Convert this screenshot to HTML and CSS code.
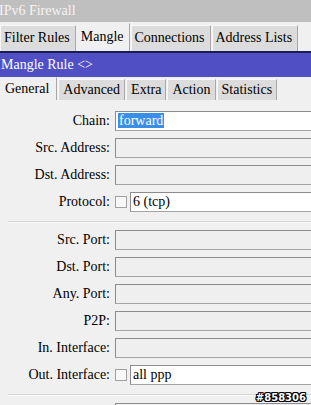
FILE: index.html
```html
<!DOCTYPE html>
<html>
<head>
<meta charset="utf-8">
<link rel="stylesheet" href="styles.css">
</head>
<body>
<div class="win">
  <div class="titlebar">IPv6 Firewall</div>
  <div class="tabs top-tabs">
    <div class="tab">Filter Rules</div>
    <div class="tab active">Mangle</div>
    <div class="tab">Connections</div>
    <div class="tab">Address Lists</div>
  </div>
  <div class="rulebar">Mangle Rule &lt;&gt;</div>
  <div class="tabs sub-tabs">
    <div class="tab active">General</div>
    <div class="tab">Advanced</div>
    <div class="tab">Extra</div>
    <div class="tab">Action</div>
    <div class="tab">Statistics</div>
  </div>
  <div class="form">
    <div class="group">
      <div class="row"><span class="lbl">Chain:</span><div class="field white"><span class="sel">forward</span></div></div>
      <div class="row"><span class="lbl">Src. Address:</span><div class="field"></div></div>
      <div class="row"><span class="lbl">Dst. Address:</span><div class="field"></div></div>
      <div class="row"><span class="lbl">Protocol:</span><span class="chk"></span><div class="field white">6 (tcp)</div></div>
    </div>
    <div class="sep"></div>
    <div class="group">
      <div class="row"><span class="lbl">Src. Port:</span><div class="field"></div></div>
      <div class="row"><span class="lbl">Dst. Port:</span><div class="field"></div></div>
      <div class="row"><span class="lbl">Any. Port:</span><div class="field"></div></div>
      <div class="row"><span class="lbl">P2P:</span><div class="field"></div></div>
      <div class="row"><span class="lbl">In. Interface:</span><div class="field"></div></div>
      <div class="row"><span class="lbl">Out. Interface:</span><span class="chk"></span><div class="field white">all ppp</div></div>
    </div>
    <div class="sep"></div>
    <div class="group">
      <div class="row"><span class="lbl"></span><div class="field"></div></div>
    </div>
  </div>
  <div class="mark">#858306</div>
</div>
</body>
</html>
```
FILE: styles.css
```css
* { box-sizing: border-box; }
html, body { margin: 0; padding: 0; }
body {
  width: 311px;
  height: 405px;
  overflow: hidden;
  background: #f0f0f0;
  font-family: "Liberation Serif", "Tinos", "DejaVu Serif", "Noto Serif", "Times New Roman", serif;
  font-size: 14px;
  color: #000;
}
.win { position: relative; width: 311px; height: 405px; overflow: hidden; }
.titlebar {
  height: 22px;
  background: #bfbfbf;
  color: #f4f4f4;
  line-height: 21px;
  text-indent: -1px;
  white-space: nowrap;
}
.tabs {
  display: flex;
  background: #f0f0f0;
  white-space: nowrap;
}
.top-tabs { height: 29px; padding-top: 3px; }
.sub-tabs { height: 23px; padding-top: 2px; }
.tab {
  background: #dcdcdc;
  border: 1px solid #f8f8f8;
  border-right-color: #a8a8a8;
  border-bottom: none;
  padding: 0 5px 0 3px;
  line-height: 24px;
  margin-right: 1px;
}
.sub-tabs .tab { line-height: 20px; padding: 0 4px 0 4px; }
.tab.active { background: #f0f0f0; border-color: #f0f0f0; border-right-color: #a8a8a8; margin-top: -2px; line-height: 26px; }
.sub-tabs .tab.active { line-height: 22px; padding: 0 7px 0 4px; }
.rulebar {
  height: 26px;
  background: #5050c4;
  border-top: 2px solid #1c1c50;
  color: #fff;
  line-height: 24px;
  padding-left: 1px;
  white-space: nowrap;
}
.form { padding-top: 11px; }
.group { display: flex; flex-direction: column; gap: 7px; }
.row { display: flex; align-items: center; height: 20px; }
.lbl { width: 110px; text-align: right; flex: none; margin-right: 5px; white-space: nowrap; }
.field {
  flex: 1;
  height: 20px;
  margin-right: -20px;
  border: 1px solid #a4a4a4;
  border-top-color: #8c8c8c;
  border-left-color: #8c8c8c;
  background: #efefef;
  line-height: 18px;
  padding-left: 2px;
  white-space: nowrap;
}
.field.white { background: #fff; }
.sel { background: #3a8ee6; color: #fff; padding: 0 1px; }
.chk {
  flex: none;
  width: 12px;
  height: 12px;
  border: 1px solid #a0a0a0;
  background: #f8f8f8;
  margin-right: 3px;
}
.sep { margin: 9px 0 7px 8px; height: 2px; background: #d4d4d4; border-bottom: 1px solid #fafafa; }
.mark {
  position: absolute;
  right: 5px;
  top: 392px;
  font-family: "DejaVu Sans", sans-serif;
  font-weight: bold;
  font-size: 10px;
  color: #fff;
  text-shadow: 1px 0 0 #000, -1px 0 0 #000, 0 1px 0 #000, 0 -1px 0 #000, 1px 1px 0 #000, -1px -1px 0 #000, 1px -1px 0 #000, -1px 1px 0 #000;
}
```
